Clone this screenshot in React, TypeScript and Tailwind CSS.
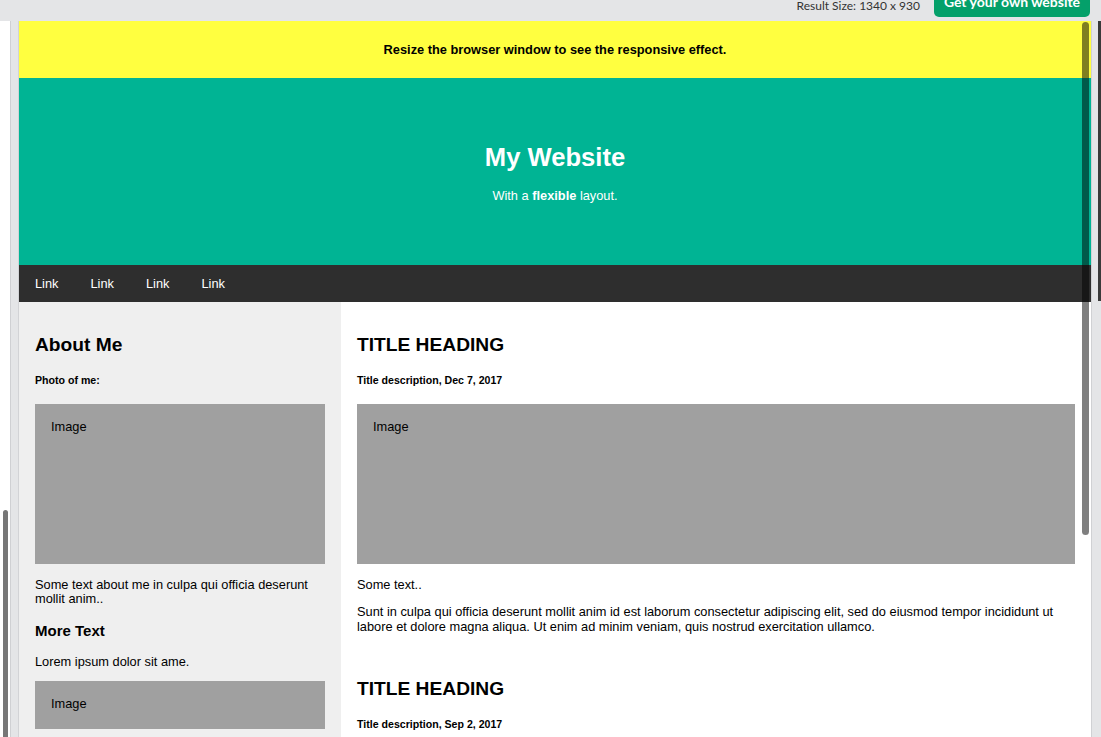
import React from "react";

function FakeImg({ h }: { h: string }) {
  return (
    <div className={`bg-[#a0a0a0] p-4 ${h}`}>
      <span>Image</span>
    </div>
  );
}

function Post({ date, withBreak }: { date: string; withBreak?: boolean }) {
  return (
    <>
      <h2 className="text-[19.2px] font-bold mt-[16px] mb-[16px]">TITLE HEADING</h2>
      <h5 className="text-[10.6px] font-bold mt-[17.7px] mb-[17.7px]">{date}</h5>
      <FakeImg h="h-[160px]" />
      <p className="mt-[14px] mb-[12.8px]">Some text..</p>
      <p className="my-[12.8px]">
        Sunt in culpa qui officia deserunt mollit anim id est laborum consectetur adipiscing elit, sed do
        eiusmod tempor incididunt ut labore et dolore magna aliqua. Ut enim ad minim veniam, quis nostrud
        exercitation ullamco.
      </p>
      {withBreak && <div className="h-[14.7px]" />}
    </>
  );
}

export default function App() {
  return (
    <div className="w-[1101px] h-[737px] overflow-hidden bg-[#e4e5e7] flex flex-col">
      {/* top bar */}
      <div className="h-[21px] shrink-0 overflow-hidden flex justify-end items-start pr-[11px] gap-[14px]">
        <span className="-mt-[2px] font-['Lato',sans-serif] text-[12px] leading-[16px] text-[#333]">
          Result Size: 1340 x 930
        </span>
        <div className="h-[17px] w-[156px] overflow-hidden bg-[#04a06a] rounded-b-[5px] flex items-end justify-center">
          <span className="mb-[6px] font-['Lato',sans-serif] font-bold text-[14px] leading-[18px] text-white">
            Get your own website
          </span>
        </div>
      </div>

      <div className="flex flex-1 min-h-0">
        {/* left code pane edge */}
        <div className="w-[11px] bg-white relative border-r border-[#cfd0d3]">
          <div className="absolute left-[3px] top-[489px] w-[5px] h-[300px] rounded-full bg-[#777]" />
        </div>
        <div className="w-[8px] border-r border-[#d2d3d6]" />

        {/* result frame */}
        <div className="w-[1072px] relative overflow-hidden bg-white font-['Liberation_Sans',Arial,sans-serif] text-[12.8px] leading-[1.15] text-black">
          <div className="bg-[#ffff40] py-[4px]">
            <h4 className="text-center font-bold mt-[18px] mb-[16px]">
              Resize the browser window to see the responsive effect.
            </h4>
          </div>
          <div className="bg-[#00b494] text-white text-center py-[48px]">
            <h1 className="text-[25.6px] font-bold mt-[17px] mb-[17px]">My Website</h1>
            <p className="mt-[1px] mb-[13px]">
              With a <b>flexible</b> layout.
            </p>
          </div>
          <div className="bg-[#2e2e2e] flex">
            {["Link", "Link", "Link", "Link"].map((l, i) => (
              <a key={i} className="text-white px-[16px] pt-[12px] pb-[10.4px]">
                {l}
              </a>
            ))}
          </div>
          <div className="flex">
            <div className="w-[322px] shrink-0 bg-[#efefef] p-4">
              <h2 className="text-[19.2px] font-bold mt-[16px] mb-[16px]">About Me</h2>
              <h5 className="text-[10.6px] font-bold mt-[17.7px] mb-[17.7px]">Photo of me:</h5>
              <FakeImg h="h-[160px]" />
              <p className="mt-[14px] mb-[12px]">Some text about me in culpa qui officia deserunt mollit anim..</p>
              <h3 className="text-[15px] font-bold mt-[15px] mb-[16px]">More Text</h3>
              <p className="mt-[12.8px] mb-[11.3px]">Lorem ipsum dolor sit ame.</p>
              <FakeImg h="h-[48px]" />
              <div className="h-[13px]" />
              <FakeImg h="h-[48px]" />
              <div className="h-[13px]" />
              <FakeImg h="h-[48px]" />
            </div>
            <div className="flex-1 p-4">
              <Post date="Title description, Dec 7, 2017" withBreak />
              <Post date="Title description, Sep 2, 2017" />
            </div>
          </div>
          {/* frame scrollbar */}
          <div className="absolute right-[2px] top-[1px] w-[7px] h-[513px] rounded-full bg-black/50" />
        </div>

        {/* right edge */}
        <div className="flex-1 border-l border-[#d0d1d4] flex justify-end">
          <div className="w-[3px] flex flex-col">
            <div className="h-[280px] bg-[#3a3a3a]" />
          </div>
        </div>
      </div>
    </div>
  );
}
